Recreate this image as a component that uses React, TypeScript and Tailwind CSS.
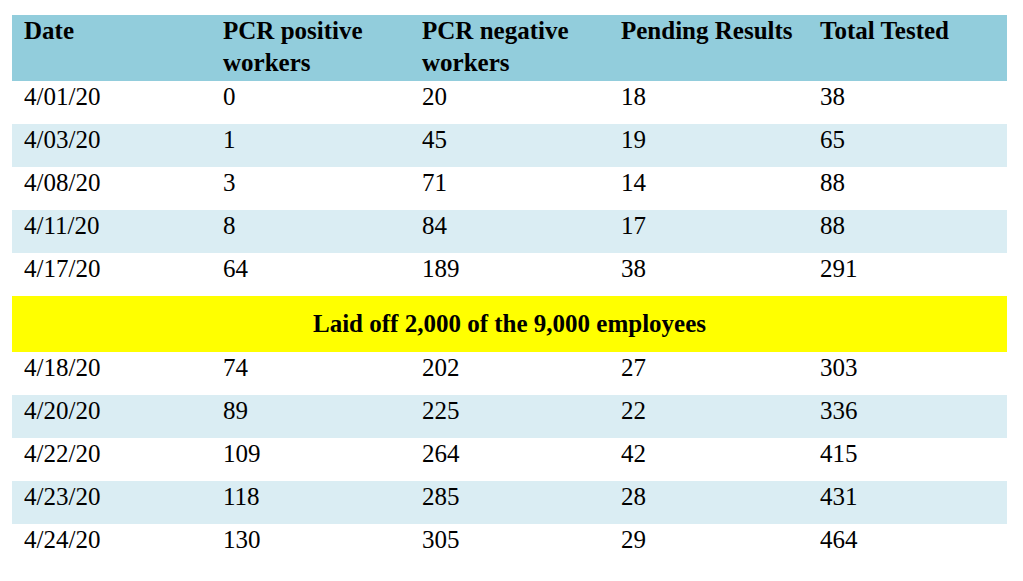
const rowsBefore = [
  ["4/01/20", "0", "20", "18", "38"],
  ["4/03/20", "1", "45", "19", "65"],
  ["4/08/20", "3", "71", "14", "88"],
  ["4/11/20", "8", "84", "17", "88"],
  ["4/17/20", "64", "189", "38", "291"],
];

const rowsAfter = [
  ["4/18/20", "74", "202", "27", "303"],
  ["4/20/20", "89", "225", "22", "336"],
  ["4/22/20", "109", "264", "42", "415"],
  ["4/23/20", "118", "285", "28", "431"],
  ["4/24/20", "130", "305", "29", "464"],
];

const headers = ["Date", "PCR positive workers", "PCR negative workers", "Pending Results", "Total Tested"];

function DataRow({ cells, shaded }: { cells: string[]; shaded: boolean }) {
  return (
    <div className={`grid grid-cols-[repeat(5,199px)] h-[43px] ${shaded ? "bg-[#daedf3]" : "bg-white"}`}>
      {cells.map((c, i) => (
        <div key={i} className="pl-3">
          {c}
        </div>
      ))}
    </div>
  );
}

export default function App() {
  return (
    <div
      className="w-[1023px] h-[581px] bg-white text-black text-[25px] leading-[32px] pt-[15px] pl-3"
      style={{ fontFamily: '"Liberation Serif", "Times New Roman", serif' }}
    >
      <div className="w-[995px]">
        <div className="grid grid-cols-[repeat(5,199px)] h-[66px] bg-[#92cddc] font-bold">
          {headers.map((h) => (
            <div key={h} className="pl-3 pr-5 last:pr-0 [&:nth-child(4)]:pr-0">
              {h}
            </div>
          ))}
        </div>
        {rowsBefore.map((r, i) => (
          <DataRow key={r[0]} cells={r} shaded={i % 2 === 1} />
        ))}
        <div className="h-[56px] bg-[#ffff00] flex items-center justify-center font-bold">
          Laid off 2,000 of the 9,000 employees
        </div>
        {rowsAfter.map((r, i) => (
          <DataRow key={r[0]} cells={r} shaded={i % 2 === 1} />
        ))}
      </div>
    </div>
  );
}
